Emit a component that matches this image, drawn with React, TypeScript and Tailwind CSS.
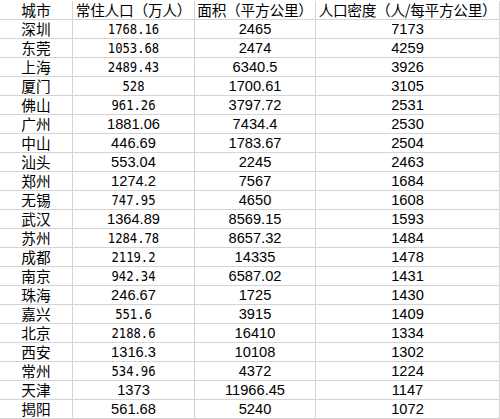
import React from 'react';

// mono = 宋体风格的等宽数字 (some cells in the sheet were typed in a different font)
type Row = { city: string; pop: string; mono: boolean; area: string; density: string };

const rows: Row[] = [
  { city: '深圳', pop: '1768.16', mono: true, area: '2465', density: '7173' },
  { city: '东莞', pop: '1053.68', mono: true, area: '2474', density: '4259' },
  { city: '上海', pop: '2489.43', mono: true, area: '6340.5', density: '3926' },
  { city: '厦门', pop: '528', mono: true, area: '1700.61', density: '3105' },
  { city: '佛山', pop: '961.26', mono: true, area: '3797.72', density: '2531' },
  { city: '广州', pop: '1881.06', mono: false, area: '7434.4', density: '2530' },
  { city: '中山', pop: '446.69', mono: false, area: '1783.67', density: '2504' },
  { city: '汕头', pop: '553.04', mono: false, area: '2245', density: '2463' },
  { city: '郑州', pop: '1274.2', mono: false, area: '7567', density: '1684' },
  { city: '无锡', pop: '747.95', mono: true, area: '4650', density: '1608' },
  { city: '武汉', pop: '1364.89', mono: false, area: '8569.15', density: '1593' },
  { city: '苏州', pop: '1284.78', mono: true, area: '8657.32', density: '1484' },
  { city: '成都', pop: '2119.2', mono: true, area: '14335', density: '1478' },
  { city: '南京', pop: '942.34', mono: true, area: '6587.02', density: '1431' },
  { city: '珠海', pop: '246.67', mono: false, area: '1725', density: '1430' },
  { city: '嘉兴', pop: '551.6', mono: true, area: '3915', density: '1409' },
  { city: '北京', pop: '2188.6', mono: true, area: '16410', density: '1334' },
  { city: '西安', pop: '1316.3', mono: false, area: '10108', density: '1302' },
  { city: '常州', pop: '534.96', mono: true, area: '4372', density: '1224' },
  { city: '天津', pop: '1373', mono: false, area: '11966.45', density: '1147' },
  { city: '揭阳', pop: '561.68', mono: false, area: '5240', density: '1072' },
];

const cell = 'h-[19px] border-r border-b border-[#d4d4d4] text-center whitespace-nowrap leading-[18px]';
const cjk = "font-['Noto_Sans_CJK_SC',sans-serif] text-[14.67px]";
const arial = "font-['Liberation_Sans',Arial,sans-serif] text-[14.67px]";
const mono = "font-['DejaVu_Sans_Mono',monospace] text-[12.2px] font-light";

const App: React.FC = () => {
  return (
    <div className="w-[500px] h-[419px] bg-white pt-px text-black overflow-hidden">
      <div className="grid grid-cols-[73px_122px_121px_184px]">
        <div className={`${cell} ${cjk}`}>城市</div>
        <div className={`${cell} ${cjk} tracking-[-0.2px]`}>常住人口（万人）</div>
        <div className={`${cell} ${cjk} tracking-[-0.2px]`}>面积（平方公里）</div>
        <div className={`${cell} ${cjk} tracking-[-0.3px]`}>人口密度（人/每平方公里）</div>

        {rows.map((r) => (
          <React.Fragment key={r.city}>
            <div className={`${cell} ${cjk}`}>{r.city}</div>
            <div className={`${cell} ${r.mono ? mono : arial}`}>
              {r.mono ? <span className="inline-block scale-y-[1.15]">{r.pop}</span> : r.pop}
            </div>
            <div className={`${cell} ${arial}`}>{r.area}</div>
            <div className={`${cell} ${arial}`}>{r.density}</div>
          </React.Fragment>
        ))}
      </div>
    </div>
  );
};

export default App;
